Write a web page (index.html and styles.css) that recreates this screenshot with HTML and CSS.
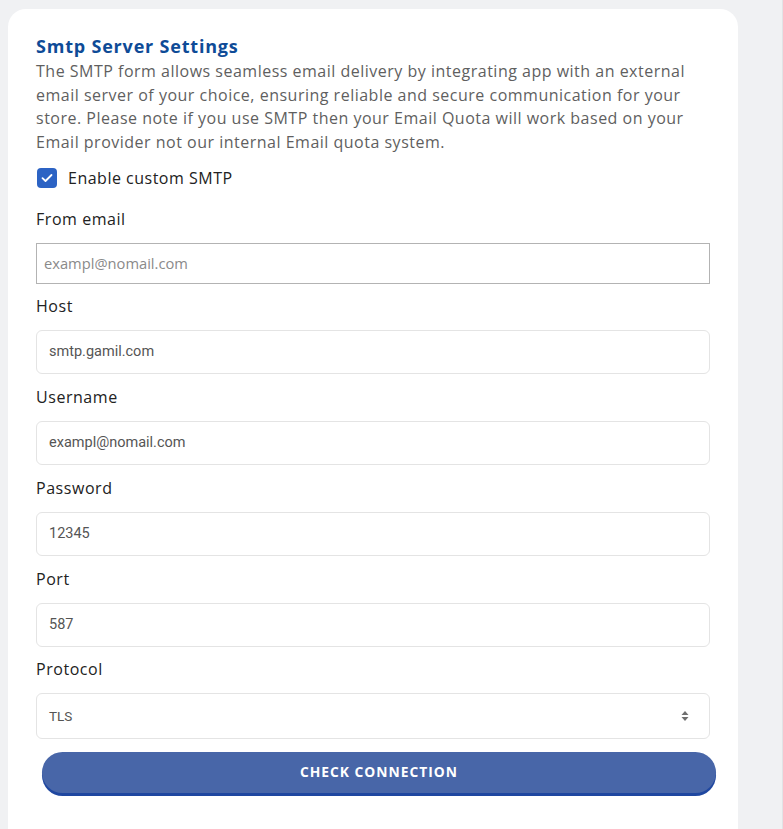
FILE: index.html
```html
<!DOCTYPE html>
<html>
<head>
<meta charset="utf-8">
<link rel="stylesheet" href="styles.css">
</head>
<body>
<div class="page">
  <div class="card">
    <h2 class="title">Smtp Server Settings</h2>
    <p class="desc">The SMTP form allows seamless email delivery by integrating app with an external email server of your choice, ensuring reliable and secure communication for your store. Please note if you use SMTP then your Email Quota will work based on your Email provider not our internal Email quota system.</p>
    <label class="check">
      <span class="box"><svg width="12" height="10" viewBox="0 0 12 10"><path d="M1.5 5.2 L4.5 8 L10.5 2" fill="none" stroke="#fff" stroke-width="1.8" stroke-linecap="round" stroke-linejoin="round"/></svg></span>
      <span class="check-label">Enable custom SMTP</span>
    </label>
    <div class="field first">
      <div class="label">From email</div>
      <div class="input plain"><span class="ph">exampl@nomail.com</span></div>
    </div>
    <div class="field tight">
      <div class="label">Host</div>
      <div class="input">smtp.gamil.com</div>
    </div>
    <div class="field">
      <div class="label">Username</div>
      <div class="input">exampl@nomail.com</div>
    </div>
    <div class="field">
      <div class="label">Password</div>
      <div class="input">12345</div>
    </div>
    <div class="field">
      <div class="label">Port</div>
      <div class="input">587</div>
    </div>
    <div class="field tight">
      <div class="label">Protocol</div>
      <div class="input select"><span>TLS</span><svg width="8" height="12" viewBox="0 0 8 12"><path d="M4 1 L7.5 5 H0.5 Z" fill="#6f6f6f"/><path d="M4 11 L7.5 7 H0.5 Z" fill="#6f6f6f"/></svg></div>
    </div>
    <button class="btn">CHECK CONNECTION</button>
  </div>
</div>
</body>
</html>
```
FILE: styles.css
```css
html, body {
  margin: 0;
  padding: 0;
}
body {
  background: #f0f1f3;
  font-family: "Open Sans", "Noto Sans", sans-serif;
  height: 829px;
  overflow: hidden;
  border-right: 1px solid #e2e3e6;
  box-sizing: border-box;
}
.page {
  padding: 9px 44px 0 8px;
}
.card {
  background: #fff;
  border-radius: 18px 18px 0 0;
  padding: 25px 28px 40px 28px;
  min-height: 860px;
  box-sizing: border-box;
}
.title {
  margin: 0;
  font-size: 18px;
  line-height: 24px;
  font-weight: 700;
  color: #0e4b97;
  letter-spacing: 0.8px;
}
.desc {
  margin: 2px 0 0 0;
  font-size: 16px;
  line-height: 23.7px;
  color: #5f5f5f;
  letter-spacing: 0.5px;
}
.check {
  display: flex;
  align-items: center;
  gap: 11px;
  margin-top: 12px;
  margin-left: 1px;
}
.box {
  width: 20px;
  height: 20px;
  border-radius: 4px;
  background: #2c63c4;
  display: flex;
  align-items: center;
  justify-content: center;
}
.check-label {
  font-size: 16px;
  line-height: 22px;
  color: #222;
  font-weight: 500;
  letter-spacing: 0.5px;
}
.field {
  margin-top: 12px;
}
.field.tight {
  margin-top: 11px;
}
.field.first {
  margin-top: 19px;
}
.label {
  font-size: 16px;
  line-height: 22px;
  color: #222;
  font-weight: 500;
  letter-spacing: 0.55px;
  margin-bottom: 13px;
}
.input {
  height: 44px;
  box-sizing: border-box;
  border: 1px solid #e4e4e4;
  border-radius: 6px;
  padding: 0 12px;
  display: flex;
  align-items: center;
  font-family: "Roboto", "Liberation Sans", sans-serif;
  font-size: 14.5px;
  color: #555;
}
.input.plain {
  height: 41px;
  border: 1px solid #b3b3b3;
  border-radius: 0;
  padding: 0 7px;
}
.ph {
  font-family: "Open Sans", sans-serif;
  color: #8a8a8a;
  font-size: 14.7px;
}
.input.select {
  height: 46px;
  justify-content: space-between;
  padding-right: 20px;
  font-size: 13.5px;
}
.btn {
  display: block;
  margin: 13px 0 0 6px;
  width: 674px;
  height: 41px;
  border: none;
  border-radius: 22px;
  background: #4866a8;
  box-shadow: 0 3px 0 #1f47a0;
  color: #fff;
  font-family: "Open Sans", sans-serif;
  font-weight: 700;
  font-size: 13.8px;
  letter-spacing: 1px;
  padding: 0 0 2px 0;
}
```
